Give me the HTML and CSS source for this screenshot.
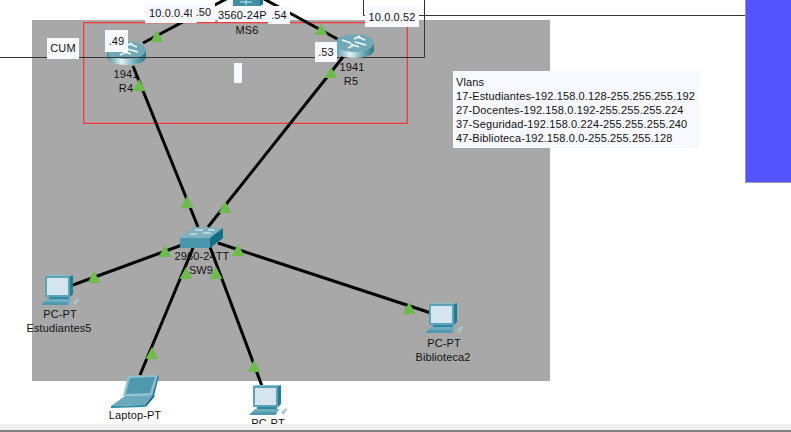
FILE: index.html

```html
<!DOCTYPE html>
<html>
<head>
<meta name="viewport" content="width=device-width, initial-scale=1">
<link rel="stylesheet" href="styles.css">
<title>Topologia</title>
</head>
<body>

<div class="canvas">
    <div class="area"></div>
    <div class="cluster"></div>

    <!-- thin wires, thick links and the devices -->
    <svg class="layer" width="791" height="424">
        <defs>
            <linearGradient id="discSide" x1="0" x2="1" y1="0" y2="0">
                <stop offset="0" stop-color="#4a93a3"/>
                <stop offset="0.38" stop-color="#e3f1f3"/>
                <stop offset="0.62" stop-color="#8dbdc8"/>
                <stop offset="1" stop-color="#257688"/>
            </linearGradient>
            <symbol id="router" width="39" height="26" viewBox="0 0 39 26" overflow="visible">
                <path d="M0 10 V17 C0 22 9 25 19.5 25 C30 25 39 22 39 17 V10 Z" fill="url(#discSide)"/>
                <ellipse cx="19.5" cy="10" rx="19.5" ry="9" fill="#72a9b9"/>
                <path d="M7 7 L16 10 M24 14 L15 11 M23 4 L30 7 M20 9 L31 12 M13 15 L19 12 M19 6 L25 3" stroke="#f4fafb" stroke-width="1.4" fill="none"/>
            </symbol>
            <symbol id="pc" width="39" height="32" viewBox="0 0 39 32">
                <polygon points="4,1 7,0 32,0 29,1" fill="#86c0cf"/>
                <rect x="4" y="1" width="25" height="21" fill="#5aa3b8"/>
                <rect x="6" y="3" width="21" height="17" fill="#d5e5ee"/>
                <polygon points="29,1 32,0 32,19 29,22" fill="#1b7f99"/>
                <rect x="8" y="22" width="20" height="2" fill="#2f89a0"/>
                <polygon points="6,24 31,24 28,27 3,27" fill="#6cacbf"/>
                <polygon points="3,27 28,27 27,30 0,30" fill="#4f9ab0"/>
                <path d="M32 27 L37 23 L38 25 L34 30 Z" fill="#a9c6cf"/>
            </symbol>
        </defs>

        <path class="wire" d="M0 57.5 H424.5 V0"/>
        <path class="wire" d="M363.5 0 V15.5 H745.5 V0"/>

        <line class="link" x1="143" y1="43" x2="228" y2="-2"/>
        <line class="link" x1="264" y1="-1" x2="341" y2="41"/>
        <line class="link" x1="133" y1="66" x2="198" y2="227"/>
        <line class="link" x1="343" y1="57" x2="208" y2="227"/>
        <line class="link" x1="73" y1="285" x2="182" y2="245"/>
        <line class="link" x1="218" y1="243" x2="431" y2="313"/>
        <line class="link" x1="193" y1="248" x2="140" y2="375"/>
        <line class="link" x1="210" y1="247" x2="262" y2="386"/>

        <use href="#router" x="107" y="40"/>
        <use href="#router" x="335" y="33"/>
        <path class="wire" d="M107 57.5 H146"/>

        <!-- MS6 is cut off by the top of the window -->
        <polygon points="233,-4 263,-4 263,4 260,6 233,6" fill="#3f8ea3"/>
        <polygon points="260,6 263,4 263,-4 260,-2" fill="#1c6f86"/>
        <path d="M240 2 H252 M246 0 V5" stroke="#cfe4ea" stroke-width="1" fill="none"/>

        <!-- SW9 -->
        <polygon points="180,238 193,227 223,228 210,238" fill="#7fb1c0"/>
        <polygon points="180,238 210,238 210,248 180,248" fill="#4a96ac"/>
        <polygon points="210,238 223,228 223,238 210,248" fill="#0f6d88"/>
        <path d="M195 230 H203 M208 230 H215 M190 234 H197 M203 233 H211" stroke="#f0f7f9" stroke-width="1" fill="none"/>

        <use href="#pc" x="41" y="275"/>
        <use href="#pc" x="425" y="303"/>
        <use href="#pc" x="249" y="385"/>

        <!-- laptop -->
        <polygon points="128,376 158,375 152,395 123,396" fill="#8fc0cf"/>
        <polygon points="130,378 155,377 150,393 126,394" fill="#4f98ae"/>
        <polygon points="158,375 159,376 154,396 152,395" fill="#1f7f98"/>
        <polygon points="125,396 153,395 145,405 111,406" fill="#6aa9bc"/>
        <polygon points="111,406 145,405 145,407 111,408" fill="#2f8aa2"/>
        <polygon points="153,395 155,396 146,407 145,405" fill="#12708c"/>
    </svg>

    <div class="name name-r4a">1941</div>
    <div class="name name-r4b">R4</div>
    <div class="name name-r5a">1941</div>
    <div class="name name-r5b">R5</div>
    <div class="name name-ms6">MS6</div>
    <div class="name name-sw9a">2960-24TT</div>
    <div class="name name-sw9b">SW9</div>
    <div class="name name-pc1a">PC-PT</div>
    <div class="name name-pc1b">Estudiantes5</div>
    <div class="name name-pc2a">PC-PT</div>
    <div class="name name-pc2b">Biblioteca2</div>
    <div class="name name-pc3">PC-PT</div>
    <div class="name name-laptop">Laptop-PT</div>

    <!-- link status triangles -->
    <svg class="layer" width="791" height="424">
        <polygon class="up" points="157,30 163.5,42 150.5,42"/>
        <polygon class="up" points="139,79 145.5,91 132.5,91"/>
        <polygon class="up" points="321,24 327.5,35 314.5,35"/>
        <polygon class="up" points="331,67 337.5,78 324.5,78"/>
        <polygon class="up" points="187,196 193.5,208 180.5,208"/>
        <polygon class="up" points="225,201 231.5,213 218.5,213"/>
        <polygon class="up" points="165,245 171.5,257 158.5,257"/>
        <polygon class="up" points="238,244 244.5,256 231.5,256"/>
        <polygon class="up" points="186,267 192.5,279 179.5,279"/>
        <polygon class="up" points="216,267 222.5,279 209.5,279"/>
        <polygon class="up" points="94,271 100.5,283 87.5,283"/>
        <polygon class="up" points="152,347 158.5,359 145.5,359"/>
        <polygon class="up" points="254,360 260.5,372 247.5,372"/>
        <polygon class="up" points="409,302 415.5,314 402.5,314"/>
    </svg>

    <div class="note note-ms6">3560-24P</div>
    <div class="note note-net48">10.0.0.48</div>
    <div class="note note-50">.50</div>
    <div class="note note-54">.54</div>
    <div class="note note-net52">10.0.0.52</div>
    <div class="note note-49">.49</div>
    <div class="note note-53">.53</div>
    <div class="note note-cum">CUM</div>
    <div class="note note-blank"></div>

    <div class="vlans">
        Vlans<br>
        17-Estudiantes-192.158.0.128-255.255.255.192<br>
        27-Docentes-192.158.0.192-255.255.255.224<br>
        37-Seguridad-192.158.0.224-255.255.255.240<br>
        47-Biblioteca-192.158.0.0-255.255.255.128
    </div>

    <div class="panel"></div>
</div>

<div class="hscroll"></div>

</body>
</html>
```

FILE: styles.css

```css
body {
    margin: 0;
    width: 791px;
    height: 432px;
    overflow: hidden;
    display: flex;
    flex-direction: column;
    background-color: white;
    font-family: "Liberation Sans", Arial, sans-serif;
    font-size: 11px;
    letter-spacing: 0.12px;
    color: #111;
}

.canvas {
    position: relative;
    height: 424px;
    overflow: hidden;
}

.hscroll {
    height: 6px;
    background-color: #f0f0f0;
    border-bottom: 2px solid #808080;
}

.layer {
    position: absolute;
    left: 0;
    top: 0;
}

/* background areas */
.area {
    position: absolute;
    left: 32px;
    top: 20px;
    width: 518px;
    height: 361px;
    background-color: #a8a8a8;
}

.cluster {
    position: absolute;
    left: 83px;
    top: 22px;
    width: 323px;
    height: 100px;
    border: 1px solid #ee3a3a;
    box-shadow: inset 0 0 0 1px rgba(238, 90, 90, 0.45);
}

.panel {
    position: absolute;
    left: 745px;
    top: 0;
    width: 45px;
    height: 182px;
    background-color: #5555ff;
    border-left: 1px solid #9a9ab4;
    border-bottom: 1px solid #9a9ab4;
}

/* links */
.wire {
    fill: none;
    stroke: #333;
    stroke-width: 1;
}

.link {
    stroke: #000;
    stroke-width: 3;
}

.up {
    fill: #6dbb4b;
}

/* device names, centered on the device */
.name {
    position: absolute;
    width: 80px;
    line-height: 14px;
    text-align: center;
}

.name-r4a { left: 86px; top: 67px; }
.name-r4b { left: 86px; top: 81px; }
.name-r5a { left: 312px; top: 60px; }
.name-r5b { left: 311px; top: 74px; }
.name-ms6 { left: 207px; top: 23px; }
.name-sw9a { left: 162px; top: 249px; }
.name-sw9b { left: 161px; top: 263px; }
.name-pc1a { left: 20px; top: 307px; }
.name-pc1b { left: 19px; top: 321px; }
.name-pc2a { left: 404px; top: 336px; }
.name-pc2b { left: 403px; top: 350px; }
.name-pc3 { left: 228px; top: 416px; }
.name-laptop { left: 95px; top: 408px; }

/* note boxes */
.note {
    position: absolute;
    background-color: #f8f8ff;
    line-height: 18px;
    text-align: center;
    overflow: hidden;
    white-space: nowrap;
}

.note-ms6 { left: 218px; top: 8px; width: 50px; height: 14px; line-height: 14px; text-align: left; }
.note-net48 { left: 145px; top: 3px; width: 48px; height: 20px; padding-left: 4px; line-height: 21px; text-align: left; }
.note-50 { left: 192px; top: 3px; width: 23px; height: 19px; }
.note-54 { left: 268px; top: 6px; width: 22px; height: 18px; }
.note-net52 { left: 365px; top: 6px; width: 54px; height: 21px; line-height: 22px; }
.note-49 { left: 105px; top: 30px; width: 23px; height: 22px; line-height: 22px; }
.note-53 { left: 315px; top: 42px; width: 22px; height: 20px; line-height: 20px; }
.note-cum { left: 47px; top: 38px; width: 32px; height: 21px; line-height: 21px; }
.note-blank { left: 234px; top: 63px; width: 8px; height: 20px; }

.vlans {
    position: absolute;
    left: 453px;
    top: 71px;
    width: 243px;
    height: 73px;
    padding: 4px 0 0 3px;
    background-color: #f8f8ff;
    line-height: 14px;
    white-space: nowrap;
}
```
